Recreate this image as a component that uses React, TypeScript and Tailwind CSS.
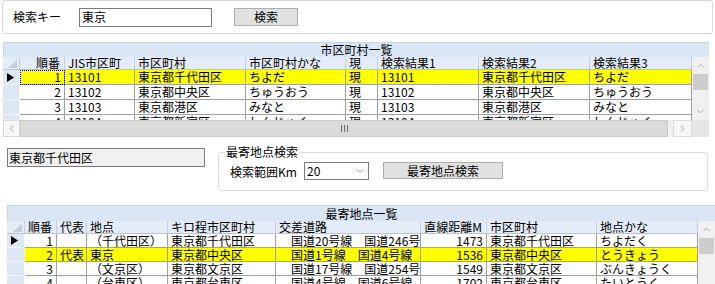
import { ChevronUp, ChevronDown, ChevronLeft, ChevronRight } from "lucide-react";

type Col = { label: string; w: string; right?: boolean };

const cols1: Col[] = [
  { label: "順番", w: "w-[45px]", right: true },
  { label: "JIS市区町", w: "w-[70px]" },
  { label: "市区町村", w: "w-[111px]" },
  { label: "市区町村かな", w: "w-[100px]" },
  { label: "現", w: "w-[32px]" },
  { label: "検索結果1", w: "w-[101px]" },
  { label: "検索結果2", w: "w-[111px]" },
  { label: "検索結果3", w: "w-[102px]" },
];

const rows1 = [
  ["1", "13101", "東京都千代田区", "ちよだ", "現", "13101", "東京都千代田区", "ちよだ"],
  ["2", "13102", "東京都中央区", "ちゅうおう", "現", "13102", "東京都中央区", "ちゅうおう"],
  ["3", "13103", "東京都港区", "みなと", "現", "13103", "東京都港区", "みなと"],
  ["4", "13104", "東京都新宿区", "しんじゅく", "現", "13104", "東京都新宿区", "しんじゅく"],
];

const cols2: Col[] = [
  { label: "順番", w: "w-[32px]", right: true },
  { label: "代表", w: "w-[30px]" },
  { label: "地点", w: "w-[81px]" },
  { label: "キロ程市区町村", w: "w-[108px]" },
  { label: "交差道路", w: "w-[145px]" },
  { label: "直線距離M", w: "w-[66px]", right: true },
  { label: "市区町村", w: "w-[110px]" },
  { label: "地点かな", w: "w-[101px]" },
];

const rows2 = [
  ["1", "", "（千代田区）", "東京都千代田区", "　国道20号線　国道246号線", "1473", "東京都千代田区", "ちよだく"],
  ["2", "代表", "東京", "東京都中央区", "　国道1号線　国道4号線　国道15号線", "1536", "東京都中央区", "とうきょう"],
  ["3", "", "（文京区）", "東京都文京区", "　国道17号線　国道254号線", "1549", "東京都文京区", "ぶんきょうく"],
  ["4", "", "（台東区）", "東京都台東区", "　国道4号線　国道6号線", "1702", "東京都台東区", "たいとうく"],
];

function Arrow() {
  return (
    <svg width="7" height="9" viewBox="0 0 7 9">
      <path d="M0 0 L7 4.5 L0 9 Z" fill="#000" />
    </svg>
  );
}

function Corner() {
  return (
    <svg width="9" height="8" viewBox="0 0 9 8" className="absolute right-[2px] bottom-[1px]">
      <path d="M9 0 L9 8 L0 8 Z" fill="#c3ccd8" />
    </svg>
  );
}

function HeaderRow({ cols, rh, h }: { cols: Col[]; rh: string; h: string }) {
  return (
    <div className={`flex ${h} bg-[#e4ecf7] border-b border-[#b7c5d8]`}>
      <div className={`${rh} relative shrink-0 border-r border-[#c2cfe0]`}>
        <Corner />
      </div>
      {cols.map((c) => (
        <div
          key={c.label}
          className={`${c.w} shrink-0 flex items-center overflow-hidden whitespace-nowrap border-r border-[#c2cfe0] ${
            c.right ? "justify-end pr-[4px]" : "pl-[3px]"
          }`}
        >
          {c.label}
        </div>
      ))}
    </div>
  );
}

function DataRow({
  cols,
  cells,
  rh,
  h,
  selected,
  current,
  focusFirst,
}: {
  cols: Col[];
  cells: string[];
  rh: string;
  h: string;
  selected?: boolean;
  current?: boolean;
  focusFirst?: boolean;
}) {
  return (
    <div className={`flex ${h} shrink-0`}>
      <div className={`${rh} shrink-0 flex items-center pl-[4px] bg-[#dde7f4] border-r border-b border-[#f4f7fb]`}>
        {current && <Arrow />}
      </div>
      {cols.map((c, i) => (
        <div
          key={c.label}
          className={`${c.w} shrink-0 flex items-center overflow-hidden whitespace-nowrap border-r border-b border-[#a0a0a0] ${
            selected ? "bg-[#ffff00]" : "bg-white"
          } ${c.right ? "justify-end pr-[3px]" : "pl-[3px]"} ${
            focusFirst && i === 0 ? "outline outline-1 outline-dotted outline-black -outline-offset-1" : ""
          }`}
        >
          {cells[i]}
        </div>
      ))}
    </div>
  );
}

function VScroll({ h }: { h: string }) {
  return (
    <div className={`w-[17px] ${h} flex flex-col bg-[#f0f0f0]`}>
      <div className="h-[17px] shrink-0 flex items-center justify-center">
        <ChevronUp size={11} color="#8a8a8a" strokeWidth={1.5} />
      </div>
      <div className="flex-1 px-[1px]">
        <div className="h-[16px] bg-[#cdcdcd]" />
      </div>
      <div className="h-[17px] shrink-0 flex items-center justify-center">
        <ChevronDown size={11} color="#8a8a8a" strokeWidth={1.5} />
      </div>
    </div>
  );
}

function TitleBar({ text, h }: { text: string; h: string }) {
  return (
    <div className={`${h} flex items-center justify-center bg-[#dbe6f4] border-t border-l border-[#c6d3e4]`}>
      {text}
    </div>
  );
}

export default function App() {
  return (
    <div className="w-[715px] h-[284px] overflow-hidden bg-white text-[12px] leading-none text-black font-['Noto_Sans_CJK_JP','Noto_Sans',sans-serif]">
      {/* search key panel */}
      <div className="ml-[2px] w-[711px] h-[34px] flex items-center border border-[#d8d8d8] rounded-[3px]">
        <span className="ml-[10px] w-[66px]">検索キー</span>
        <div className="w-[133px] h-[19px] flex items-center pl-[2px] border border-[#7a7a7a] bg-white">東京</div>
        <button className="ml-[22px] w-[64px] h-[18px] flex items-center justify-center bg-[#e1e1e1] border border-[#adadad]">
          検索
        </button>
      </div>

      {/* 市区町村一覧 */}
      <div className="mt-[8px] ml-[3px] w-[706px]">
        <TitleBar text="市区町村一覧" h="h-[15px]" />
        <div className="flex">
          <div className="w-[689px] flex flex-col">
            <div className="h-[63px] overflow-hidden flex flex-col">
              <HeaderRow cols={cols1} rh="w-[17px]" h="h-[15px]" />
              {rows1.map((r, i) => (
                <DataRow
                  key={i}
                  cols={cols1}
                  cells={r}
                  rh="w-[17px]"
                  h="h-[15px]"
                  selected={i === 0}
                  current={i === 0}
                  focusFirst={i === 0}
                />
              ))}
            </div>
            <div className="h-[17px] flex bg-[#f0f0f0]">
              <div className="w-[17px] flex items-center justify-center bg-[#f7f7f7] border border-[#dadada]">
                <ChevronLeft size={11} color="#707070" strokeWidth={1.5} />
              </div>
              <div className="w-[648px] flex items-center justify-center gap-[2px] bg-[#dadada] border border-[#cacaca]">
                <div className="w-[1px] h-[7px] bg-[#6a6a6a]" />
                <div className="w-[1px] h-[7px] bg-[#6a6a6a]" />
                <div className="w-[1px] h-[7px] bg-[#6a6a6a]" />
              </div>
              <div className="flex-1" />
              <div className="w-[19px] flex items-center justify-center bg-[#f7f7f7] border border-[#dadada]">
                <ChevronRight size={11} color="#707070" strokeWidth={1.5} />
              </div>
            </div>
          </div>
          <div className="flex flex-col">
            <VScroll h="h-[63px]" />
            <div className="w-[17px] h-[17px] bg-[#e6e6e6]" />
          </div>
        </div>
      </div>

      {/* selected city + nearest search */}
      <div className="mt-[8px] h-[50px] flex items-start">
        <div className="mt-[3px] ml-[7px] w-[198px] h-[19px] flex items-center pl-[1px] bg-[#f0f0f0] border border-[#7a7a7a]">
          東京都千代田区
        </div>
        <div className="relative mt-[7px] ml-[13px] w-[490px] h-[39px] border border-[#dcdcdc] rounded-[3px]">
          <span className="absolute left-[6px] top-[-7px] bg-white px-[1px]">最寄地点検索</span>
          <div className="mt-[8px] h-[19px] flex items-center">
            <span className="ml-[11px] w-[74px] pt-[3px]">検索範囲Km</span>
            <div className="w-[65px] h-[18px] flex items-center justify-between pl-[2px] pr-[3px] bg-white border border-[#7a7a7a]">
              <span>20</span>
              <ChevronDown size={10} color="#555" strokeWidth={1.6} />
            </div>
            <button className="ml-[14px] w-[120px] h-[17px] flex items-center justify-center bg-[#e1e1e1] border border-[#adadad]">
              最寄地点検索
            </button>
          </div>
        </div>
      </div>

      {/* 最寄地点一覧 */}
      <div className="mt-[10px] ml-[7px] w-[708px]">
        <TitleBar text="最寄地点一覧" h="h-[16px]" />
        <div className="flex">
          <div className="w-[691px] h-[63px] overflow-hidden flex flex-col">
            <HeaderRow cols={cols2} rh="w-[18px]" h="h-[15px]" />
            {rows2.map((r, i) => (
              <DataRow
                key={i}
                cols={cols2}
                cells={r}
                rh="w-[18px]"
                h="h-[14px]"
                selected={i === 1}
                current={i === 0}
              />
            ))}
          </div>
          <VScroll h="h-[80px]" />
        </div>
      </div>
    </div>
  );
}
